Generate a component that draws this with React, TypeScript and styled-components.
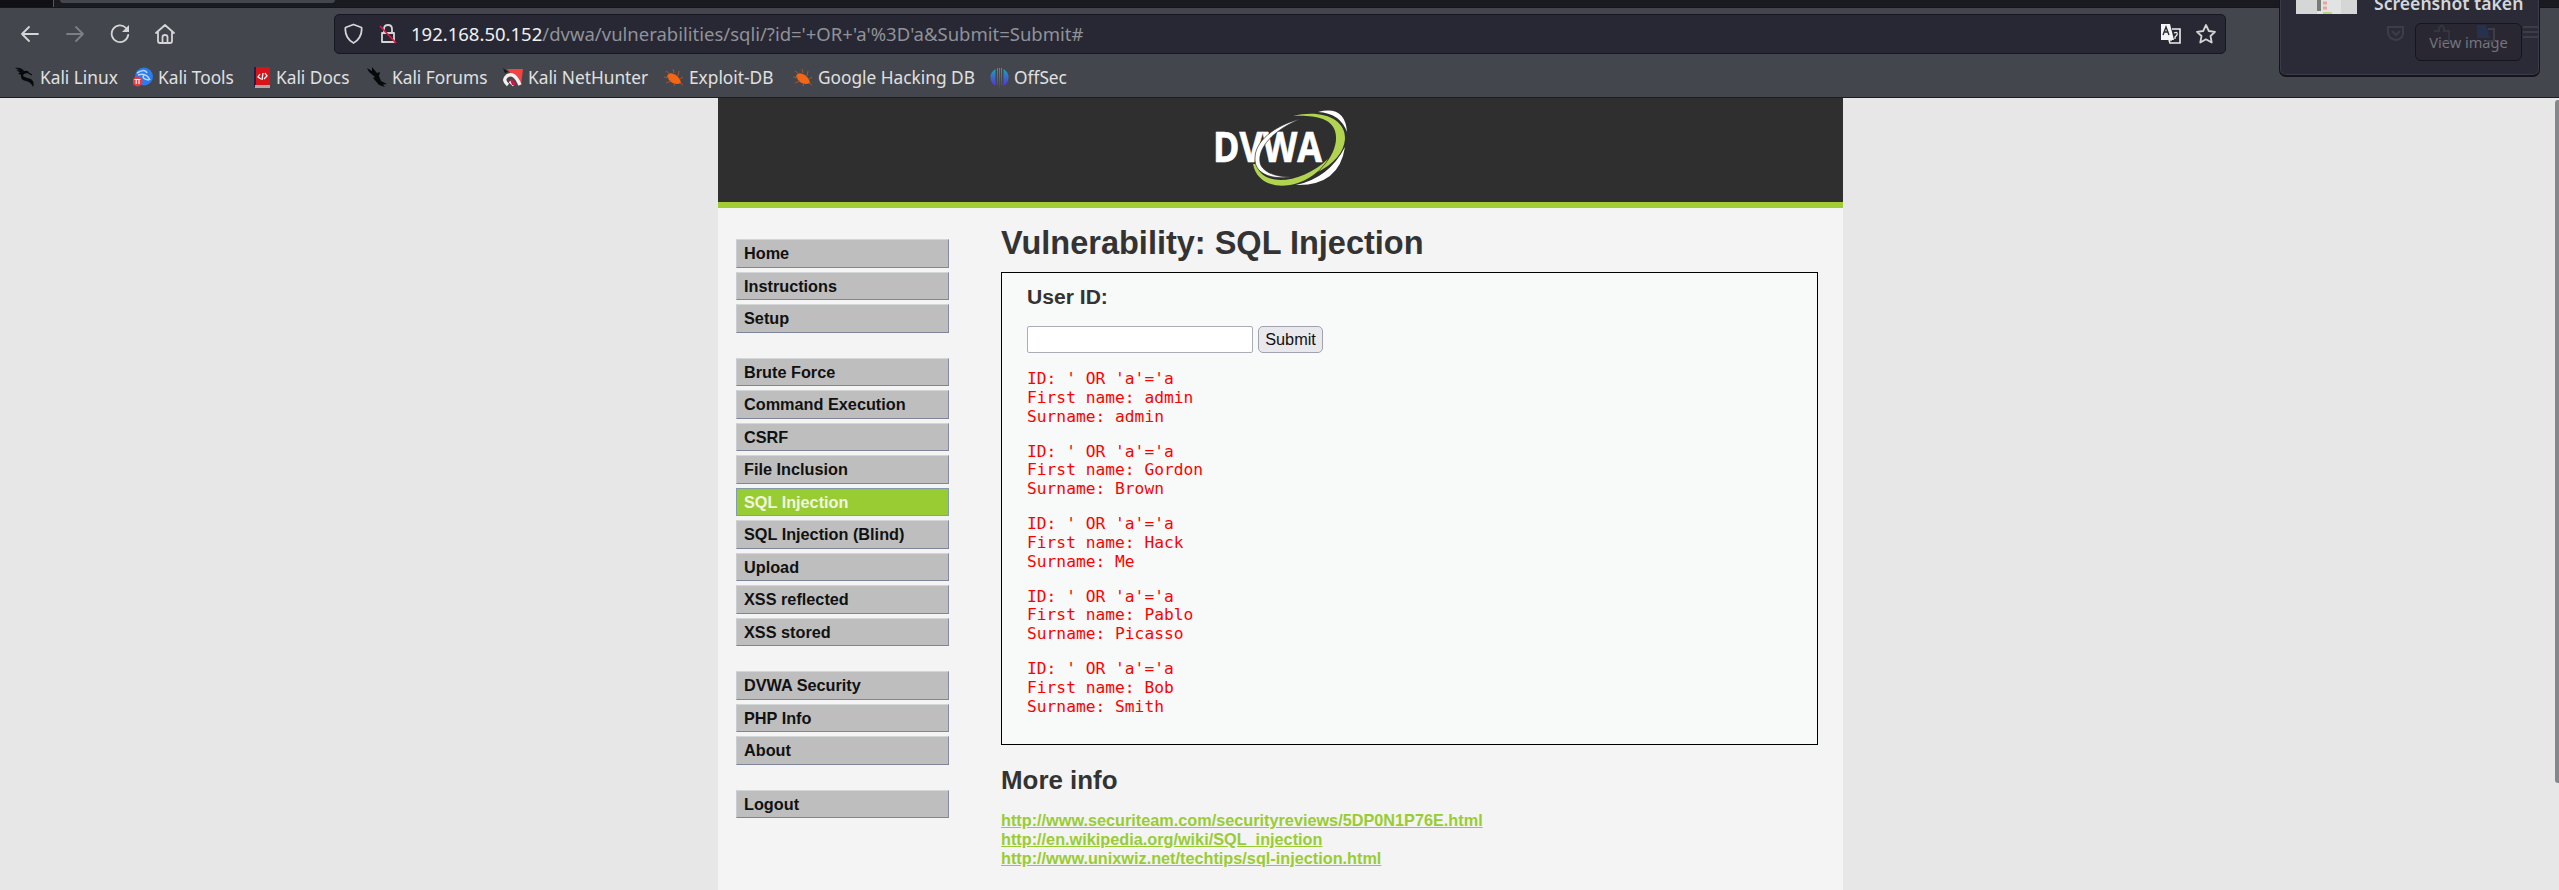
import React from 'react';
import styled, { createGlobalStyle } from 'styled-components';

const Global = createGlobalStyle`
  *{box-sizing:border-box}
  html,body{margin:0;background:#e7e7e7}
  body{height:890px;overflow:hidden;font-family:"Liberation Sans",Arial,sans-serif}
`;
const Screen = styled.div`position:relative;height:890px;display:flex;flex-direction:column;overflow:hidden;`;
const Chrome = styled.header`height:98px;flex:none;background:#44464d;border-bottom:1px solid #1c1d24;color:#e0e0e0;font-family:"Noto Sans",sans-serif;`;
const TabStrip = styled.div`height:8px;background:#1a1b20;border-bottom:1px solid #15161a;display:flex;`;
const TabEdge = styled.div`width:54px;border-right:1px solid #55575c;background:#101115;`;
const ActiveTab = styled.div`width:275px;height:3px;margin-left:6px;background:#44464d;border-radius:0 0 4px 4px;`;
const NavBar = styled.div`height:50px;padding:1px 0 0 20px;display:flex;align-items:center;`;
const NavIcons = styled.div`display:flex;gap:25px;width:314px;svg{flex:none}`;
const UrlBar = styled.div`width:1892px;height:40px;background:#272834;border:1px solid #17181f;border-radius:5px;display:flex;align-items:center;padding:0 9px;`;
const UrlText = styled.div`flex:1;margin-left:13px;font-size:18.5px;line-height:38px;color:#919298;white-space:pre;b{font-weight:400;color:#f0f0f2}`;
const Bookmarks = styled.nav`height:39px;padding-left:15px;display:flex;align-items:center;`;
const Bookmark = styled.div<{ $w: number }>`width:${p => p.$w}px;flex:none;display:flex;align-items:center;gap:5px;font-size:17.3px;line-height:36px;white-space:pre;svg{flex:none}`;
const Toast = styled.aside`position:absolute;left:2279px;top:-4px;width:261px;height:81px;background:#2a2b36;border:1px solid #14151b;border-bottom-width:2px;border-radius:0 0 7px 7px;box-shadow:inset 0 0 0 1px #3b3c47;color:#d5d6d8;font-family:"Noto Sans",sans-serif;`;
const ToastTop = styled.div`height:25px;display:flex;padding-left:16px;overflow:visible;`;
const Thumb = styled.div`width:61px;height:17px;background:#d5d6d6;display:flex;justify-content:center;svg{display:block}`;
const ToastTitle = styled.div`margin:-7px 0 0 17px;font-weight:600;font-size:17.6px;line-height:26px;white-space:nowrap;`;
const ToastBody = styled.div`position:relative;height:45px;padding:1px 17px 6px 0;display:flex;justify-content:flex-end;`;
const Ghost = styled.svg`position:absolute;left:106px;top:0;`;
const ViewButton = styled.button`width:107px;height:38px;background:#292832;border:1px solid #15161b;border-radius:6px;color:#74757c;font:14.6px "Noto Sans",sans-serif;padding:0;`;
const Viewport = styled.div`flex:1;min-height:0;display:flex;justify-content:center;position:relative;`;
const ScrollThumb = styled.div`position:absolute;right:0;top:2px;width:4px;height:683px;border-radius:3px 0 0 3px;background:#85878b;`;
const Page = styled.main`width:1125px;background:#f4f4f4;display:flex;flex-direction:column;margin-left:2px;`;
const Banner = styled.div`height:110px;flex:none;background:#2f2f2f;border-bottom:6px solid #a1cc33;display:flex;justify-content:center;svg{margin-left:2px}`;
const Columns = styled.div`display:flex;padding-left:18px;`;
const Sidebar = styled.nav`width:213px;padding-top:31px;`;
const MenuGroup = styled.ul`list-style:none;margin:0 0 25px;padding:0;`;
const MenuItem = styled.li<{ $active?: boolean }>`
  height:28.5px;margin-bottom:4px;padding-left:7px;font-weight:700;font-size:16.25px;line-height:27px;
  color:${p => p.$active ? '#f0f6df' : '#111'};background:${p => p.$active ? '#99cc33' : '#bebebe'};
  border:1px solid;border-color:${p => p.$active ? '#819dac' : '#d3d6d6 #858ca0 #7d859a #c8cbd0'};
`;
const Content = styled.section`margin-left:52px;width:817px;color:#333;`;
const Title = styled.h1`margin:17px 0 10px;font-size:32.5px;line-height:37px;height:37px;`;
const Panel = styled.div`height:473px;background:#f8faf9;border:1px solid #000;padding:11px 25px;`;
const Label = styled.h3`margin:0;font-size:21.1px;line-height:26px;`;
const Form = styled.div`display:flex;gap:5px;margin:16px 0 17px;`;
const Field = styled.input`width:226px;height:27px;border:1px solid #acacb6;border-radius:2px;background:#fff;padding:0 4px;outline:none;`;
const Submit = styled.button`width:65px;height:27px;border:1px solid #a2a2ae;border-radius:5px;background:#e9e9ed;color:#111;padding:0;font:16.3px "Liberation Sans",sans-serif;`;
const Result = styled.pre`margin:0 0 16.25px;color:#f00;font:16.25px/18.75px "DejaVu Sans Mono",monospace;`;
const More = styled.h2`margin:20px 0 16px;font-size:25.9px;line-height:30px;`;
const LinkLine = styled.div`line-height:18.8px;font-size:16.25px;a{color:#99cc33;font-weight:700;}`;

const stroke = { fill: 'none', stroke: '#d5d5d6', strokeWidth: 1.8, strokeLinecap: 'round' as const, strokeLinejoin: 'round' as const };

const Dragon = () => <svg width="20" height="21" viewBox="0 0 20 21"><path d="M0 1Q6 0 9 4L13 4L14 6Q8 6 8 9Q11 11 16 12Q20 15 18 20Q16 15 11 14Q5 13 6 8L3 6.5L5 5.5L1 3L5 3.5Z" fill="#08090a" /><path d="M10 4L17 8" stroke="#08090a" strokeWidth="1.2" /></svg>;
const Tools = () => <svg width="20" height="21" viewBox="0 0 20 21"><circle cx="11" cy="9.5" r="9" fill="#287cf0" /><path d="M4 6Q12 1 14 6M5 8Q13 5 17 13M11 8Q8 12 16 13" fill="none" stroke="#b9d6fa" strokeWidth="1.5" /><circle cx="4.5" cy="14.5" r="5" fill="#e83a42" /><path d="M1.5 12.5H7.5M3.2 12V17M6 12V17" fill="none" stroke="#fff" strokeWidth="1.1" /></svg>;
const Docs = () => <svg width="17" height="21" viewBox="0 0 17 21"><path d="M0 0H16V19H0Z" fill="#d8141b" /><path d="M0 0H2V20H0Z" fill="#1d2247" /><path d="M1 18H16V21H1Z" fill="#b8a4a7" /><path d="M6 7L4 10L7 12M9 6L8 13M11 6L13 9L10 12" stroke="#fff" strokeWidth="1.3" fill="none" /></svg>;
const Forums = () => <svg width="20" height="21" viewBox="0 0 20 21"><path d="M0 1L5 4L5 0L10 6L13 5L12 9L14 14L20 17L16 17.5L18 20L12 18L6 11L8 10L2 5Z" fill="#07080a" /></svg>;
const Hunter = () => <svg width="20" height="21" viewBox="0 0 20 21"><path d="M4 2H20L18 18Z" fill="#f3423f" /><path d="M0 1L5 5L2 6Z" fill="#111" /><path d="M5 18Q-1 13 4 9Q11 4 17 18M11 18L7 14" fill="none" stroke="#f8eef0" strokeWidth="3.4" /><path d="M7 13Q10 10 13 18H9Z" fill="#c31b49" /></svg>;
const Bug = () => <svg width="20" height="18" viewBox="0 0 20 18"><path d="M3 7Q5 2 12 6Q16 9 17 14Q10 17 5 11Z" fill="#f26616" /><path d="M6 5L2 2M10 4L9 0M14 7L15 2M16 10L19 8M5 9L0 8M7 12L2 14M11 14L10 17M16 14L19 16" stroke="#a65431" strokeWidth="1" /></svg>;
const OffSec = () => <svg width="19" height="20" viewBox="0 0 18 20"><defs><linearGradient id="os" x2="0" y2="1"><stop stopColor="#12a9bd" /><stop offset="1" stopColor="#6424d9" /></linearGradient></defs><path d="M5 1V18Q0 15 0 9Q0 4 5 1ZM6.5 0H7.5V17H6.5ZM8.5 0H9.5V20H8.5ZM10.5 0H11.5V17H10.5ZM13 1Q18 4 18 9Q18 15 13 18Z" fill="url(#os)" /></svg>;

const bookmarks: [string, number, React.FC][] = [
  ['Kali Linux', 118, Dragon], ['Kali Tools', 121, Tools], ['Kali Docs', 113, Docs], ['Kali Forums', 136, Forums],
  ['Kali NetHunter', 161, Hunter], ['Exploit-DB', 129, Bug], ['Google Hacking DB', 197, Bug], ['OffSec', 90, OffSec],
];
const menu = [
  ['Home', 'Instructions', 'Setup'],
  ['Brute Force', 'Command Execution', 'CSRF', 'File Inclusion', 'SQL Injection', 'SQL Injection (Blind)', 'Upload', 'XSS reflected', 'XSS stored'],
  ['DVWA Security', 'PHP Info', 'About'],
  ['Logout'],
];
const users = [['admin', 'admin'], ['Gordon', 'Brown'], ['Hack', 'Me'], ['Pablo', 'Picasso'], ['Bob', 'Smith']];
const links = ['http://www.securiteam.com/securityreviews/5DP0N1P76E.html', 'http://en.wikipedia.org/wiki/SQL_injection', 'http://www.unixwiz.net/techtips/sql-injection.html'];

const Logo = () => (
  <svg width="140" height="100" viewBox="0 0 140 100">
    <path d="M106 14Q133 7 135 34Q128 15 106 14Z" fill="#fff" />
    <path d="M133 49Q127 88 84 87Q117 80 133 49Z" fill="#fff" />
    <path d="M81 18C108 11 134 20 133 41C132 55 121 66 106 74C119 62 127 46 123 33C119 20 102 17 81 18Z" fill="#b0d44f" />
    <path d="M44 66C50 89 88 87 116 61C97 93 47 98 41 66Z" fill="#b0d44f" />
    <text x="1" y="64" fill="#fff" stroke="#fff" strokeWidth=".7" fontFamily="Open Sans, sans-serif" fontWeight="700" fontSize="41" textLength="109" lengthAdjust="spacingAndGlyphs">DVWA</text>
    <path d="M88 21C60 33 46 50 48 64C49 73 62 79 79 79C58 82 42 75 43 60C43 44 61 28 88 21Z" fill="#fff" stroke="#2f2f2f" strokeWidth=".7" />
  </svg>
);

export default function App() {
  return <><Global /><Screen>
    <Chrome>
      <TabStrip><TabEdge /><ActiveTab /></TabStrip>
      <NavBar>
        <NavIcons>
          <svg width="20" height="22" viewBox="0 0 20 22"><path d="M18 11H2M9 4L2 11L9 18" {...stroke} /></svg>
          <svg width="20" height="22" viewBox="0 0 20 22"><path d="M2 11H18M11 4L18 11L11 18" {...stroke} stroke="#7d7f83" /></svg>
          <svg width="20" height="22" viewBox="0 0 20 22"><path d="M16 5A8.3 8.3 0 1 0 18.2 12" {...stroke} /><path d="M19 2V9H12Z" fill="#d5d5d6" /></svg>
          <svg width="20" height="22" viewBox="0 0 20 22"><path d="M1 10L10 2L19 10M3 9V18Q3 20 5 20H15Q17 20 17 18V9M7.5 20V14Q7.5 12 10 12Q12.5 12 12.5 14V20" {...stroke} /></svg>
        </NavIcons>
        <UrlBar>
          <svg width="19" height="22" viewBox="0 0 19 22"><path d="M9.5 1.5L17.5 4.5C18.5 12 14 18 9.5 20C5 18 .5 12 1.5 4.5Z" {...stroke} /></svg>
          <svg width="35" height="22" viewBox="-16 0 35 22"><path d="M5 9V6Q5 2 9 2Q13 2 13 6V10M4 10H15V19H3V10Z" {...stroke} /><path d="M1 3L17 20" stroke="#df1744" strokeWidth="1.8" /></svg>
          <UrlText><b>192.168.50.152</b>/dvwa/vulnerabilities/sqli/?id='+OR+'a'%3D'a&amp;Submit=Submit#</UrlText>
          <svg width="22" height="22" viewBox="0 0 22 22"><path d="M1 1H10L14 17H1Z" fill="#f5f5f5" /><path d="M12 6H20V20H10L9 17M12 17H9" fill="none" stroke="#eee" strokeWidth="1.6" /><path d="M3 12L6 4L9 12M4 9H8" fill="none" stroke="#292a34" strokeWidth="1.4" /><path d="M14 10Q18 8 17 12L15 14V16" fill="none" stroke="#eee" strokeWidth="1.3" /></svg>
          <svg width="34" height="22" viewBox="-14 0 34 22"><path d="M10 2L12.8 8L19 8.8L14.5 13L15.7 19.5L10 16.3L4.3 19.5L5.5 13L1 8.8L7.2 8Z" {...stroke} /></svg>
        </UrlBar>
      </NavBar>
      <Bookmarks>{bookmarks.map(([n, w, Icon]) => <Bookmark key={n} $w={w}><Icon />{n}</Bookmark>)}</Bookmarks>
    </Chrome>
    <Viewport>
      <Page>
        <Banner><Logo /></Banner>
        <Columns>
          <Sidebar>{menu.map((g, i) => <MenuGroup key={i}>{g.map(t => <MenuItem key={t} $active={t === 'SQL Injection'}>{t}</MenuItem>)}</MenuGroup>)}</Sidebar>
          <Content>
            <Title>Vulnerability: SQL Injection</Title>
            <Panel>
              <Label>User ID:</Label>
              <Form><Field aria-label="User ID" /><Submit>Submit</Submit></Form>
              {users.map(([f, s]) => <Result key={f}>{`ID: ' OR 'a'='a\nFirst name: ${f}\nSurname: ${s}`}</Result>)}
            </Panel>
            <More>More info</More>
            {links.map(l => <LinkLine key={l}><a href={l}>{l}</a></LinkLine>)}
          </Content>
        </Columns>
      </Page>
      <ScrollThumb />
    </Viewport>
    <Toast>
      <ToastTop>
        <Thumb><svg width="28" height="17" viewBox="0 0 28 17"><path d="M4 0H28V17H4Z" fill="#e2e3e3" /><path d="M4 3H8V14H4Z" fill="#777c75" /><path d="M10 6H14M10 11H14" stroke="#e8a3a3" strokeWidth="3" /><path d="M10 16H19" stroke="#c2d28a" strokeWidth="2" /></svg></Thumb>
        <ToastTitle>Screenshot taken</ToastTitle>
      </ToastTop>
      <ToastBody>
        <ViewButton>View image</ViewButton>
        <Ghost width="154" height="26" viewBox="0 0 154 26" fill="none" stroke="#3c3d48" strokeWidth="2"><path d="M2 5H17V12Q16 17 10 18Q3 17 2 11ZM6 9L10 13L14 9" /><path d="M48 9H53V6Q56 1 58 6V9H63V20H50" opacity=".6" /><path d="M91 3H100L104 16H91Z" fill="#27355e" fillOpacity=".6" stroke="none" /><path d="M102 7H108V19H100M137 5H152M137 10H152M137 15H152" /></Ghost>
      </ToastBody>
    </Toast>
  </Screen></>;
}
